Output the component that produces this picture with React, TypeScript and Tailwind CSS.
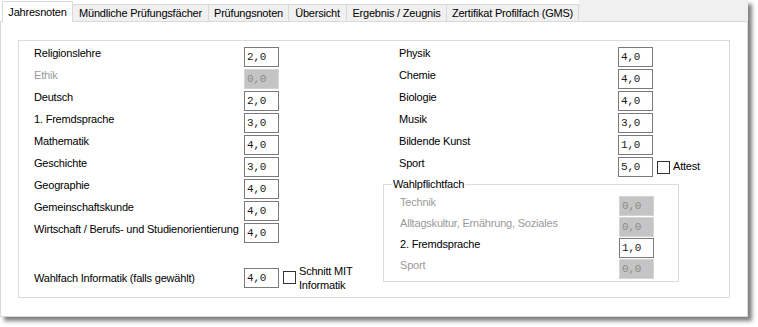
import React from 'react';

type Row = { label: string; value: string; disabled?: boolean };

const leftRows: Row[] = [
  { label: 'Religionslehre', value: '2,0' },
  { label: 'Ethik', value: '0,0', disabled: true },
  { label: 'Deutsch', value: '2,0' },
  { label: '1. Fremdsprache', value: '3,0' },
  { label: 'Mathematik', value: '4,0' },
  { label: 'Geschichte', value: '3,0' },
  { label: 'Geographie', value: '4,0' },
  { label: 'Gemeinschaftskunde', value: '4,0' },
  { label: 'Wirtschaft / Berufs- und Studienorientierung', value: '4,0' },
];

const rightRows: Row[] = [
  { label: 'Physik', value: '4,0' },
  { label: 'Chemie', value: '4,0' },
  { label: 'Biologie', value: '4,0' },
  { label: 'Musik', value: '3,0' },
  { label: 'Bildende Kunst', value: '1,0' },
];

const wahlRows: Row[] = [
  { label: 'Technik', value: '0,0', disabled: true },
  { label: 'Alltagskultur, Ernährung, Soziales', value: '0,0', disabled: true },
  { label: '2. Fremdsprache', value: '1,0' },
  { label: 'Sport', value: '0,0', disabled: true },
];

const tabs = [
  { name: 'Jahresnoten', w: 'w-[71px]' },
  { name: 'Mündliche Prüfungsfächer', w: 'w-[136px]' },
  { name: 'Prüfungsnoten', w: 'w-[80px]' },
  { name: 'Übersicht', w: 'w-[58px]' },
  { name: 'Ergebnis / Zeugnis', w: 'w-[100px]' },
  { name: 'Zertifikat Profilfach (GMS)', w: 'w-[132px]' },
];

function NoteBox({ value, disabled }: { value: string; disabled?: boolean }) {
  return (
    <div
      className={`w-[35px] h-[20px] shrink-0 flex items-center pl-[2px] pt-[1px] border font-['Liberation_Mono',monospace] text-[11px] ${
        disabled
          ? 'bg-[#c4c4c4] border-[#d4d4d4] text-[#8c8c8c]'
          : 'bg-white border-[#7a7a7a] text-[#1a1a1a]'
      }`}
    >
      {value}
    </div>
  );
}

function Check() {
  return <div className="w-[13px] h-[13px] shrink-0 border border-[#333333] bg-white" />;
}

function NoteRow({ row, labelWidth }: { row: Row; labelWidth: string }) {
  return (
    <div className="flex items-start h-[20px]">
      <span
        className={`${labelWidth} shrink-0 leading-[13px] whitespace-nowrap ${
          row.disabled ? 'text-[#9a9a9a]' : 'text-black'
        }`}
      >
        {row.label}
      </span>
      <NoteBox value={row.value} disabled={row.disabled} />
    </div>
  );
}

export default function App() {
  return (
    <div className="w-[758px] h-[327px] bg-white font-['Liberation_Sans',Arial,sans-serif] text-[11px] tracking-[-0.2px] text-black">
      <div className="w-[748px] h-[317px] flex flex-col bg-white shadow-[4px_4px_4px_rgba(0,0,0,0.5)]">
        {/* tab strip */}
        <div className="flex items-end h-[21px] pl-[2px] shrink-0">
          {tabs.map((t, i) =>
            i === 0 ? (
              <div
                key={t.name}
                className={`${t.w} h-[21px] -mb-[1px] flex items-center justify-center bg-white border border-b-0 border-[#d9d9d9] relative z-10`}
              >
                {t.name}
              </div>
            ) : (
              <div
                key={t.name}
                className={`${t.w} h-[17px] flex items-center justify-center bg-[#f0f0f0] border border-l-0 border-b-0 border-[#d9d9d9]`}
              >
                {t.name}
              </div>
            )
          )}
          <div className="flex-1 self-stretch bg-[#f0f0f0]" />
        </div>

        {/* tab page */}
        <div className="flex-1 border border-[#d9d9d9] bg-white pt-[18px] pl-[17px]">
          <div className="w-[712px] h-[258px] border border-[#dcdcdc] flex">
            {/* left column */}
            <div className="w-[364px] shrink-0 flex flex-col pt-[6px] pl-[15px]">
              <div className="flex flex-col gap-[2px]">
                {leftRows.map((r) => (
                  <NoteRow key={r.label} row={r} labelWidth="w-[210px]" />
                ))}
              </div>
              <div className="flex items-center mt-[21px]">
                <span className="w-[210px] shrink-0 whitespace-nowrap">
                  Wahlfach Informatik (falls gewählt)
                </span>
                <NoteBox value="4,0" />
                <div className="ml-[4px] mt-[-1px]">
                  <Check />
                </div>
                <div className="ml-[3px] leading-[14px]">
                  Schnitt MIT
                  <br />
                  Informatik
                </div>
              </div>
            </div>

            {/* right column */}
            <div className="flex flex-col pt-[6px]">
              <div className="flex flex-col gap-[2px] pl-[16px]">
                {rightRows.map((r) => (
                  <NoteRow key={r.label} row={r} labelWidth="w-[219px]" />
                ))}
                <div className="flex items-start h-[20px]">
                  <span className="w-[219px] shrink-0 leading-[13px]">Sport</span>
                  <NoteBox value="5,0" />
                  <div className="ml-[4px] mt-[4px]">
                    <Check />
                  </div>
                  <span className="ml-[3px] mt-[3px] leading-[13px]">Attest</span>
                </div>
              </div>

              <fieldset className="w-[296px] mt-[1px] border border-[#dcdcdc] pb-[2px]">
                <legend className="ml-[8px] px-[1px] leading-[13px]">Wahlpflichtfach</legend>
                <div className="flex flex-col gap-[1px] pl-[16px] pt-[5px]">
                  {wahlRows.map((r) => (
                    <NoteRow key={r.label} row={r} labelWidth="w-[219px]" />
                  ))}
                </div>
              </fieldset>
            </div>
          </div>
        </div>
      </div>
    </div>
  );
}
